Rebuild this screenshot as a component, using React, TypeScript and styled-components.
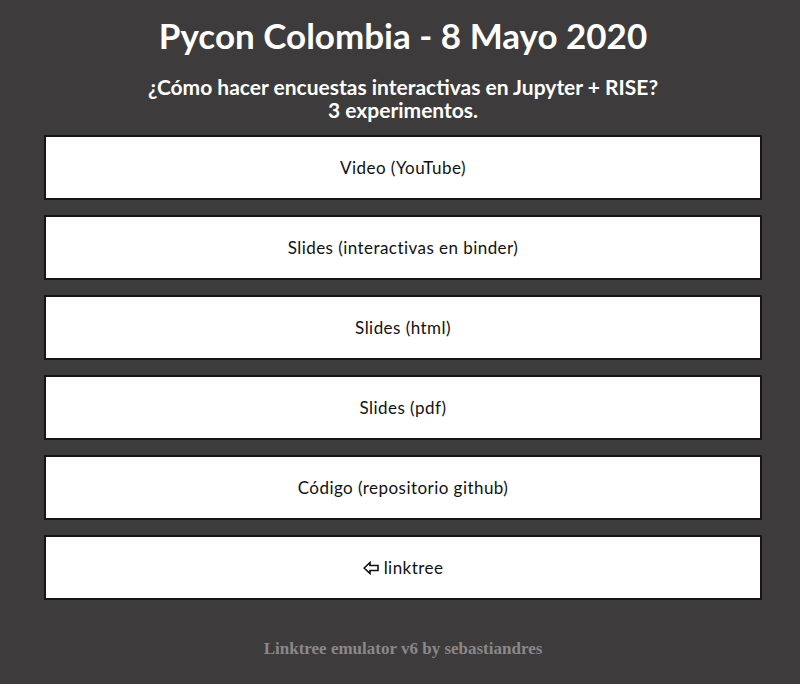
import React from "react";
import styled, { createGlobalStyle } from "styled-components";

const Global = createGlobalStyle`
  html, body { margin: 0; padding: 0; background: #3d3b3c; }
  body { font-family: "Lato", "DejaVu Sans", sans-serif; }
`;

const Page = styled.div`
  display: flex;
  flex-direction: column;
  align-items: center;
  padding: 13px 38px 0 44px;
  min-height: 684px;
  box-sizing: border-box;
`;

const Title = styled.h1`
  margin: 0;
  color: #ffffff;
  font-size: 35px;
  font-weight: 700;
  line-height: 44px;
  text-align: center;
`;

const Subtitle = styled.h2`
  margin: 18px 0 14px 0;
  color: #ffffff;
  font-size: 21px;
  font-weight: 700;
  line-height: 23px;
  text-align: center;
`;

const LinkList = styled.div`
  display: flex;
  flex-direction: column;
  gap: 15px;
  width: 100%;
`;

const LinkButton = styled.a`
  display: flex;
  align-items: center;
  justify-content: center;
  height: 61px;
  background: #ffffff;
  border: 2px solid #151515;
  color: #111111;
  font-size: 17px;
  letter-spacing: 0.45px;
  text-decoration: none;
`;

const ArrowIcon = styled.svg`
  width: 16px;
  height: 14px;
  margin-right: 5px;
  margin-top: 1px;
`;

const Footer = styled.p`
  margin: 39px 0 0 0;
  color: #8a8889;
  font-family: "Liberation Serif", serif;
  font-weight: 700;
  font-size: 17px;
  text-align: center;
`;

const links = [
  "Video (YouTube)",
  "Slides (interactivas en binder)",
  "Slides (html)",
  "Slides (pdf)",
  "Código (repositorio github)",
];

export default function App() {
  return (
    <>
      <Global />
      <Page>
        <Title>Pycon Colombia - 8 Mayo 2020</Title>
        <Subtitle>
          ¿Cómo hacer encuestas interactivas en Jupyter + RISE?
          <br />3 experimentos.
        </Subtitle>
        <LinkList>
          {links.map((l) => (
            <LinkButton key={l} href="#">
              {l}
            </LinkButton>
          ))}
          <LinkButton href="#">
            <ArrowIcon viewBox="0 0 16 14">
              <path
                d="M1.2 7 L7 1.5 L7 4.5 L15 4.5 L15 9.5 L7 9.5 L7 12.5 Z"
                fill="none"
                stroke="#111"
                strokeWidth="1.6"
                strokeLinejoin="miter"
              />
            </ArrowIcon>
            linktree
          </LinkButton>
        </LinkList>
        <Footer>Linktree emulator v6 by sebastiandres</Footer>
      </Page>
    </>
  );
}
